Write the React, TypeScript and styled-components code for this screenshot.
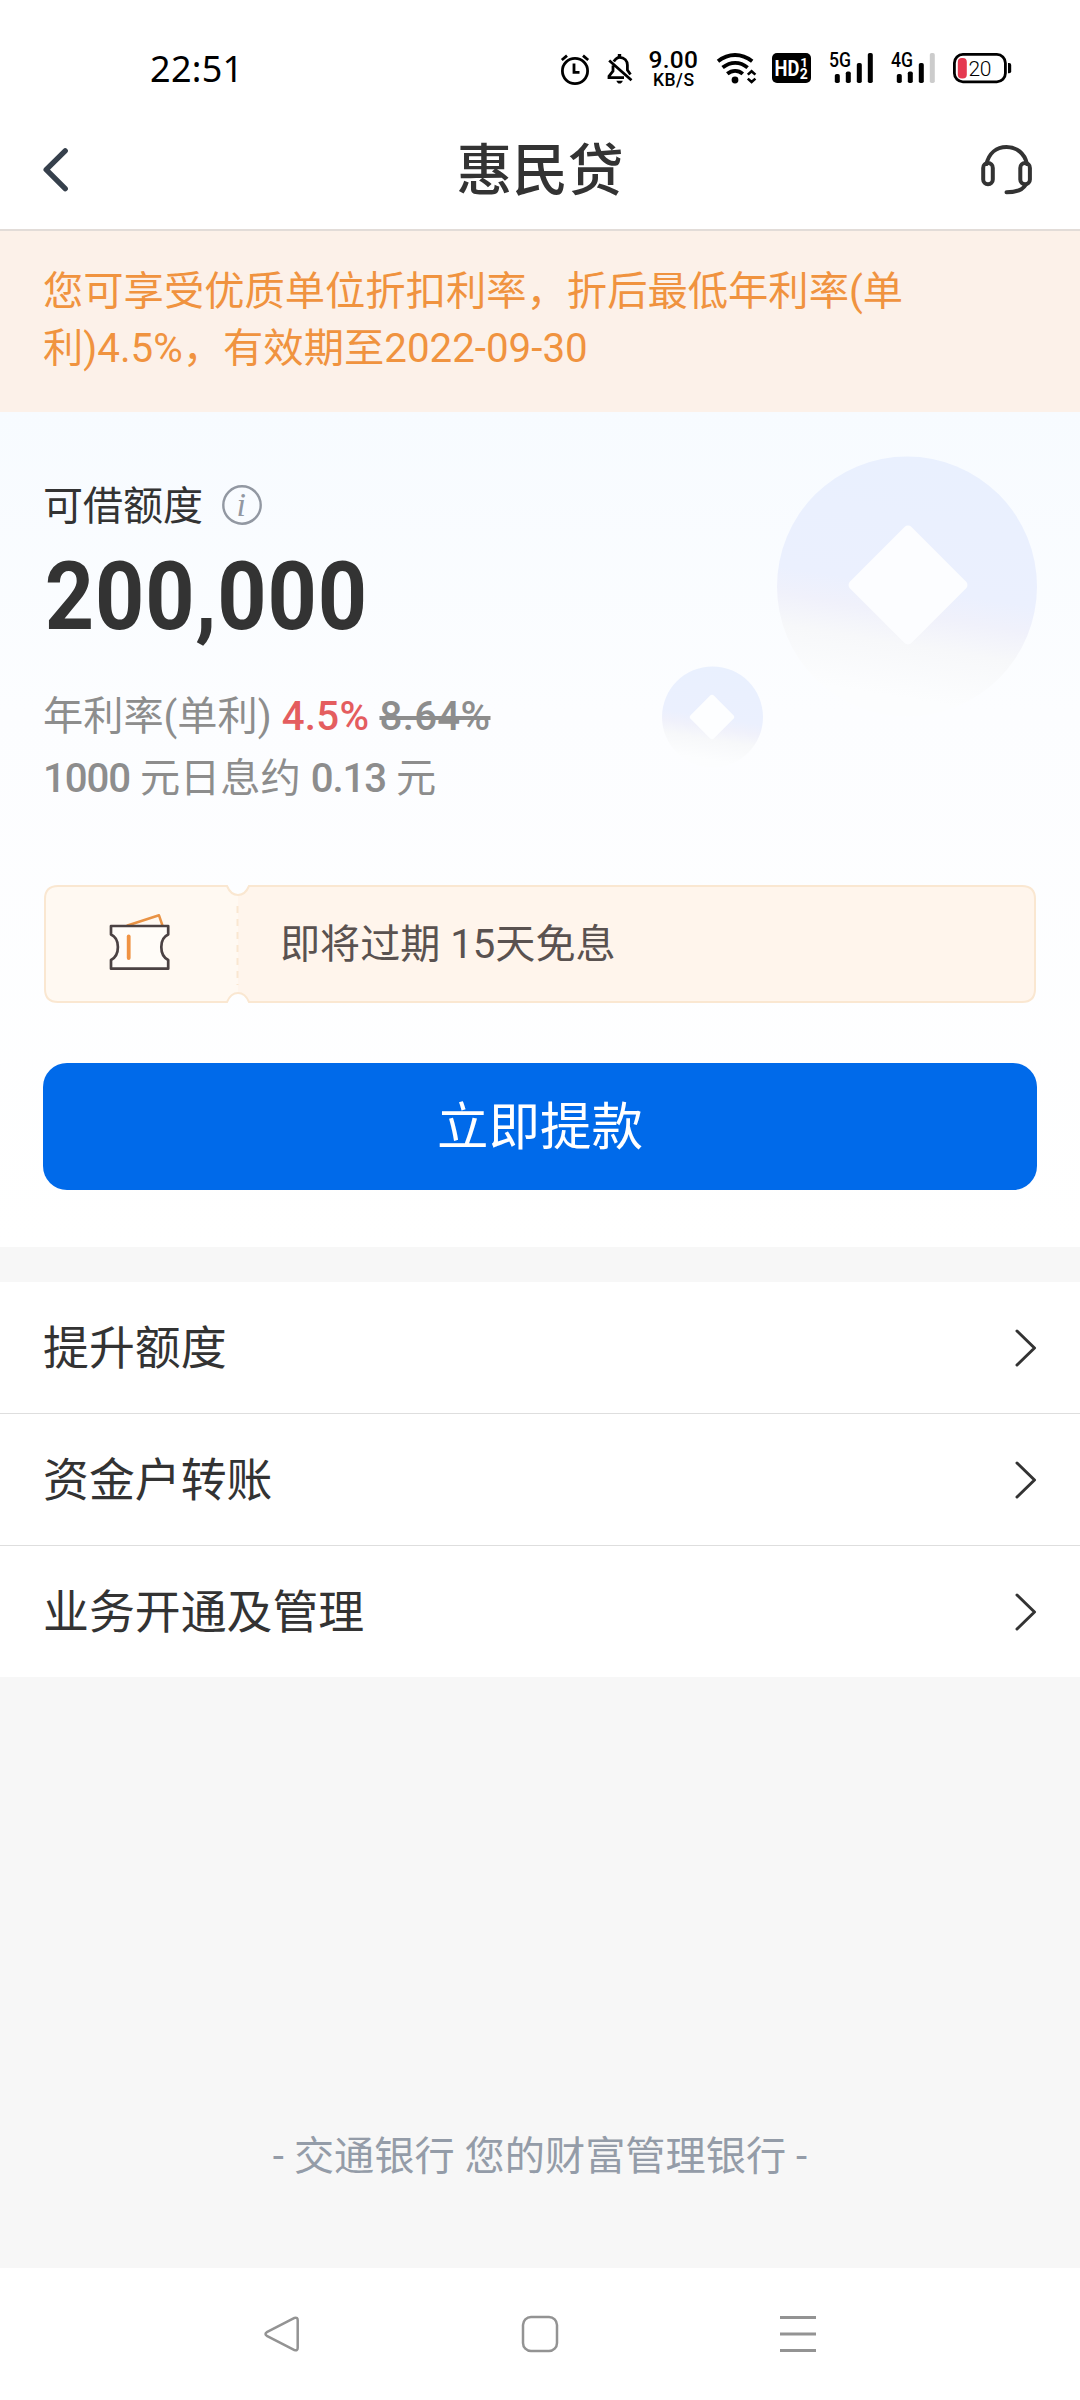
import React from "react";
import styled, { createGlobalStyle } from "styled-components";

const GlobalStyle = createGlobalStyle`
  *, *::before, *::after { box-sizing: border-box; }
  body {
    margin: 0;
    background: #f7f7f7;
    font-family: Roboto, "Noto Sans CJK SC", sans-serif;
    color: #333;
  }
`;

const Screen = styled.div`
  width: 1080px;
  height: 2400px;
  display: flex;
  flex-direction: column;
  background: #f7f7f7;
  overflow: hidden;
`;

const StatusBar = styled.div`
  height: 110px;
  padding: 28px 69px 0 150px;
  display: flex;
  align-items: center;
  justify-content: space-between;
  background: #fff;
`;

const Clock = styled.span`
  font-family: "Noto Sans", sans-serif;
  font-size: 36px;
  line-height: 40px;
  letter-spacing: 0.3px;
  color: #000;
`;

const StatusIcons = styled.div`
  display: flex;
  align-items: center;
`;

const StatusIcon = styled.svg<{ $gap?: number }>`
  display: block;
  height: 40px;
  margin-left: ${(p) => p.$gap ?? 18}px;
  overflow: visible;
  font-family: Roboto, sans-serif;
`;

const Header = styled.header`
  height: 121px;
  padding: 0 43px;
  display: flex;
  align-items: center;
  justify-content: space-between;
  background: #fff;
  border-bottom: 2px solid #e2dcd8;
`;

const HeaderIcon = styled.svg`
  display: block;
  width: 56px;
  height: 56px;
`;

const Title = styled.h1`
  margin: 0;
  padding-top: 3px;
  font-size: 55.7px;
  line-height: 80px;
  font-weight: 500;
  color: #333;
`;

const Notice = styled.div`
  height: 181px;
  padding: 32px 130px 0 43px;
  background: #fcf1e9;
  color: #f0933f;
  font-size: 40.3px;
  line-height: 57px;
  white-space: nowrap;
`;

const Hero = styled.section`
  position: relative;
  height: 835px;
  padding: 63px 43px 0;
  background: linear-gradient(#f7fbff, #fcfdff 36%, #fff);
  display: flex;
  flex-direction: column;
`;

const Coins = styled.svg`
  position: absolute;
  top: 0;
  right: 0;
  width: 460px;
  height: 400px;
`;

const LimitLabel = styled.div`
  display: flex;
  align-items: center;
  gap: 18px;
  height: 60px;
  font-size: 40px;
  line-height: 60px;
`;

const LabelText = styled.span`
  padding-top: 4px;
`;

const InfoIcon = styled.svg`
  width: 42px;
  height: 42px;
  font-family: "Liberation Serif", serif;
`;

const Amount = styled.div`
  height: 124px;
  line-height: 124px;
  font-size: 94px;
  font-weight: 700;
  letter-spacing: 0.9px;
  transform: scaleX(0.915);
  transform-origin: left;
  padding-left: 2px;
  white-space: nowrap;
`;

const Rates = styled.div`
  margin-top: 27px;
  font-size: 40.2px;
  line-height: 62px;
  color: #8d8d8d;
`;

const Figure = styled.span<{ $tone?: "hot" | "old" }>`
  font-weight: 500;
  letter-spacing: ${(p) => (p.$tone ? "0.35px" : "-1.1px")};
  color: ${(p) => (p.$tone === "hot" ? "#e45d5f" : "inherit")};
  text-decoration: ${(p) => (p.$tone === "old" ? "line-through" : "none")};
`;

const Coupon = styled.div`
  position: relative;
  margin-top: 75px;
  height: 118px;
  display: flex;
  align-items: center;
`;

const CouponShape = styled.svg`
  position: absolute;
  inset: 0;
  width: 994px;
  height: 118px;
`;

const CouponStub = styled.div`
  position: relative;
  width: 195px;
  padding: 0 3px 4px 0;
  display: flex;
  justify-content: center;
`;

const CouponText = styled.span`
  position: relative;
  margin-left: 42px;
  padding-bottom: 8px;
  font-size: 40.1px;
  color: #5a5250;
`;

const PrimaryButton = styled.button`
  margin: 60px 0 0;
  width: 994px;
  height: 127px;
  border: 0;
  border-radius: 24px;
  background: #006aea;
  color: #fff;
  font: 400 51.5px/76px Roboto, "Noto Sans CJK SC", sans-serif;
  padding: 2px 0 0;
`;

const Menu = styled.nav`
  margin-top: 35px;
  background: #fff;
  display: flex;
  flex-direction: column;
`;

const MenuRow = styled.div`
  height: 131px;
  padding: 0 43px;
  display: flex;
  align-items: center;
  justify-content: space-between;
  font-size: 45.9px;
  color: #333;
  & + & {
    height: 132px;
    border-top: 1px solid #dedede;
  }
`;

const MenuLabel = styled.span`
  padding-bottom: 8px;
`;

const Slogan = styled.footer`
  flex: 1;
  display: flex;
  align-items: flex-end;
  justify-content: center;
  padding-bottom: 81px;
  font-size: 40.2px;
  line-height: 60px;
  color: #949ca8;
`;

const SystemNav = styled.div`
  height: 132px;
  padding: 0 262px 0 261px;
  display: flex;
  align-items: center;
  justify-content: space-between;
  background: #fff;
`;

const NavIcon = styled.svg`
  display: block;
  width: 40px;
  height: 40px;
`;

const menuItems = ["提升额度", "资金户转账", "业务开通及管理"];

function AlarmIcon() {
  return (
    <StatusIcon viewBox="561 49 28 40" width={28} fill="none" stroke="#000" strokeWidth={2.8}>
      <circle cx={575} cy={71} r={12.6} />
      <path d="M574 63.5V72.3H579.5M561.8 60L567 55.6M588.2 60L583 55.6" />
    </StatusIcon>
  );
}

function MutedBellIcon() {
  return (
    <StatusIcon viewBox="607 49 26 40" width={26} fill="none" stroke="#000" strokeWidth={2.8}>
      <path d="M609.2 60.5L631.5 80.2M613 65.5V71L609 76.2V77.6H624M613.8 61.4C616 58 619 57.3 619.5 57.3C624.5 57.3 627.4 61 627.4 65V70L630.5 74.5" />
      <path d="M617.8 54h3.4v3h-3.4zM616.4 80.8h6.4c-.6 1.9-1.7 2.8-3.2 2.8s-2.6-.9-3.2-2.8z" fill="#000" stroke="none" />
    </StatusIcon>
  );
}

function NetSpeed() {
  return (
    <StatusIcon $gap={16} viewBox="649 49 49 40" width={49}>
      <text x={648.5} y={68.3} fontSize={24.5} fontWeight={500} textLength={49.5} lengthAdjust="spacing">9.00</text>
      <text x={653} y={86} fontSize={17.5} fontWeight={500} textLength={41}>KB/S</text>
    </StatusIcon>
  );
}

function WifiIcon() {
  return (
    <StatusIcon $gap={19} viewBox="717 49 40 40" width={40} fill="none" stroke="#000" strokeWidth={3.8}>
      <path d="M718 61.3C728.5 52.9 741.5 52.9 752.2 61.3M722.6 67.6C730.5 61.2 740 61.2 747.6 67.6M727.3 73.8C732 69.8 738.3 69.8 742.8 73.8" />
      <circle cx={735} cy={80} r={3.4} fill="#000" stroke="none" />
      <path d="M747.8 74.6L751.6 71.2L755.4 74.6M747.8 78.6L751.6 82L755.4 78.6" strokeWidth={2.6} />
    </StatusIcon>
  );
}

function HdIcon() {
  return (
    <StatusIcon $gap={15} viewBox="772 49 39 40" width={39} fontWeight={700} fill="#fff">
      <rect x={772} y={53} width={39} height={30} rx={5} fill="#000" />
      <text x={774.6} y={76} fontSize={21.8} textLength={24.8} lengthAdjust="spacingAndGlyphs">HD</text>
      <text x={800.3} y={66.8} fontSize={13.5}>1</text>
      <text x={799.8} y={78.8} fontSize={14}>2</text>
    </StatusIcon>
  );
}

function SignalIcon({ x, label, bars }: { x: number; label: string; bars: number }) {
  return (
    <StatusIcon viewBox={`${x} 49 44 40`} width={44}>
      <text x={x} y={67.3} fontSize={19.7} fontWeight={500} textLength={22} lengthAdjust="spacingAndGlyphs">
        {label}
      </text>
      {[74, 71.5, 63, 53].map((top, i) => (
        <rect
          key={top}
          x={x + 5.8 + i * 11}
          y={top}
          width={5}
          height={83 - top}
          rx={1.8}
          fill={i < bars ? "#000" : "#ccc"}
        />
      ))}
    </StatusIcon>
  );
}

function BatteryIcon() {
  return (
    <StatusIcon viewBox="953 49 58 40" width={58}>
      <rect x={954.4} y={54.4} width={51} height={27.4} rx={8.5} fill="none" stroke="#000" strokeWidth={2.8} />
      <path d="M1008 63h1.2a2 2 0 0 1 2 2v6.2a2 2 0 0 1-2 2H1008z" />
      <rect x={957.8} y={58} width={9} height={20.5} rx={4} fill="#e5394f" />
      <text x={968.5} y={75.9} fontSize={21} fontWeight={300} textLength={23}>20</text>
    </StatusIcon>
  );
}

export default function App() {
  return (
    <Screen>
      <GlobalStyle />
      <StatusBar>
        <Clock>22:51</Clock>
        <StatusIcons>
          <AlarmIcon />
          <MutedBellIcon />
          <NetSpeed />
          <WifiIcon />
          <HdIcon />
          <SignalIcon x={829} label="5G" bars={4} />
          <SignalIcon x={891} label="4G" bars={3} />
          <BatteryIcon />
        </StatusIcons>
      </StatusBar>

      <Header>
        <HeaderIcon viewBox="0 0 56 56" fill="none" stroke="#36404c" strokeWidth={5.4} strokeLinecap="round" strokeLinejoin="round">
          <path d="M22.2 8.8L3.2 27.7L22.2 46.7" />
        </HeaderIcon>
        <Title>惠民贷</Title>
        <HeaderIcon viewBox="981 141.5 56 56" fill="none" stroke="#333" strokeWidth={4} strokeLinecap="round">
          <path d="M986.5 163.500C989 152.5 996.5 146.6 1006.5 146.6C1016.5 146.6 1024.5 152.5 1027 163.5M1025.5 184.5C1022.5 189.5 1015.5 191.8 1006.5 191.8" />
          <rect x={983.2} y={162.6} width={9.6} height={21.2} rx={4.8} />
          <rect x={1020.3} y={162.6} width={9.6} height={21.2} rx={4.8} />
        </HeaderIcon>
      </Header>

      <Notice>
        您可享受优质单位折扣利率，折后最低年利率(单
        <br />
        利)4.5%，有效期至2022-09-30
      </Notice>

      <Hero>
        <Coins viewBox="620 412 460 400">
          <defs>
            <linearGradient id="coin" x1="0.58" y1="0" x2="0.42" y2="1">
              <stop offset="0" stopColor="#e9f0fe" />
              <stop offset="0.5" stopColor="#ebf0fe" />
              <stop offset="0.6" stopColor="#f0f1fb" />
              <stop offset="0.72" stopColor="#f7f8fa" />
              <stop offset="0.92" stopColor="#fcfdfe" />
            </linearGradient>
          </defs>
          <circle cx={907} cy={586.5} r={130} fill="url(#coin)" />
          <rect x={864.5} y={541.5} width={87} height={87} rx={5} fill="#fcfdff" transform="rotate(45 908 585)" />
          <circle cx={712.5} cy={717} r={50.5} fill="url(#coin)" />
          <rect x={695.5} y={700.5} width={33} height={33} rx={3} fill="#fdfeff" transform="rotate(45 712 717)" />
        </Coins>

        <LimitLabel>
          <LabelText>可借额度</LabelText>
          <InfoIcon viewBox="0 0 42 42">
            <circle cx={21} cy={21} r={18.7} fill="none" stroke="#9298a2" strokeWidth={2.4} />
            <text x={15.5} y={31.5} fontSize={34} fontStyle="italic" fill="#9298a2">i</text>
          </InfoIcon>
        </LimitLabel>
        <Amount>200,000</Amount>
        <Rates>
          <div>
            年利率(单利) <Figure $tone="hot">4.5%</Figure> <Figure $tone="old">8.64%</Figure>
          </div>
          <div>
            <Figure>1000</Figure> 元日息约 <Figure>0.13</Figure> 元
          </div>
        </Rates>

        <Coupon>
          <CouponShape viewBox="0 0 994 118" fill="none" stroke="#fae7d1" strokeWidth={2}>
            <path d="M194.5 10V108C190 108 186 111 184 117H15Q2 117 2 104V14Q2 1 15 1H184C186 7 190 10 194.5 10Z" fill="#fff9f2" stroke="none" />
            <path d="M194.5 10V108C199 108 203 111 206 117H979Q992 117 992 104V14Q992 1 979 1H206C203 7 199 10 194.5 10Z" fill="#fff5ec" stroke="none" />
            <path d="M184 1H15Q2 1 2 14V104Q2 117 15 117H184C189 105 201 105 206 117H979Q992 117 992 104V14Q992 1 979 1H206C201 13 189 13 184 1Z" />
            <path d="M194.5 21V100" strokeDasharray="7 6" />
          </CouponShape>
          <CouponStub>
            <svg width={64} height={60} viewBox="108 911 64 60" fill="none" strokeLinecap="round" strokeLinejoin="round">
              <path d="M128.5 924.5L160 914.3L163.3 924" stroke="#e99345" strokeWidth={2.5} />
              <path d="M112 925H169.2V933.5C160 937.5 160 954.5 169.2 959V967.7H112V959C121.2 954.5 121.2 937.5 112 933.5Z" fill="#fffcf8" stroke="#4b4243" strokeWidth={2.7} />
              <path d="M129.7 935.5V957" stroke="#f09343" strokeWidth={3.8} />
            </svg>
          </CouponStub>
          <CouponText>即将过期 15天免息</CouponText>
        </Coupon>

        <PrimaryButton>立即提款</PrimaryButton>
      </Hero>

      <Menu>
        {menuItems.map((item) => (
          <MenuRow key={item}>
            <MenuLabel>{item}</MenuLabel>
            <svg width={24} height={42} viewBox="0 0 24 42" fill="none" stroke="#333" strokeWidth={3} strokeLinecap="round" strokeLinejoin="round">
              <path d="M4 4L21.500 21L4 38" />
            </svg>
          </MenuRow>
        ))}
      </Menu>

      <Slogan>- 交通银行 您的财富管理银行 -</Slogan>

      <SystemNav>
        <NavIcon viewBox="0 0 40 40" fill="none" stroke="#939393" strokeWidth={2.5} strokeLinejoin="round">
          <path d="M33.5 3.9L5.8 18.2Q3.2 20 5.8 21.8L33.5 36.1Q36.7 37 36.7 33.8V6.2Q36.7 3 33.5 3.9Z" />
        </NavIcon>
        <NavIcon viewBox="0 0 40 40" fill="none" stroke="#939393" strokeWidth={2.5}>
          <rect x={3} y={3} width={34} height={34} rx={8} />
        </NavIcon>
        <NavIcon viewBox="0 0 40 40" fill="none" stroke="#939393" strokeWidth={2.8}>
          <path d="M2 3.5H38M2 20H38M2 36.5H38" />
        </NavIcon>
      </SystemNav>
    </Screen>
  );
}
